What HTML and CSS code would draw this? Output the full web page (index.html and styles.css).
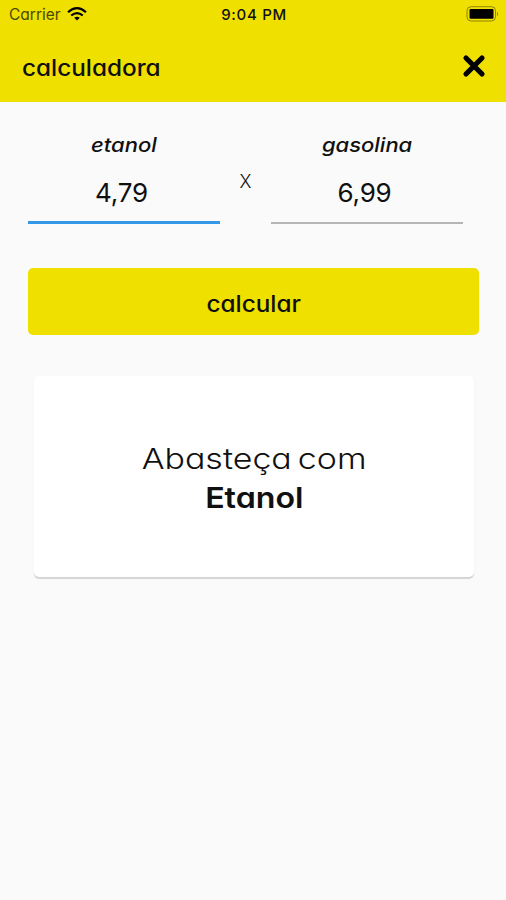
FILE: index.html
```html
<!DOCTYPE html>
<html lang="pt-BR">
<head>
    <meta charset="UTF-8">
    <meta name="viewport" content="width=device-width, initial-scale=1.0">
    <title>calculadora</title>
    <link rel="stylesheet" href="styles.css">
</head>
<body>
    <header class="header">
        <div class="status">
            <div class="carrier">
                <span class="carrier-name">Carrier</span>
                <svg class="wifi" width="20" height="14" viewBox="0 0 20 14" fill="none" stroke="#000" stroke-width="2.2">
                    <path d="M1 5.2Q10-2.8 19 5.2"/>
                    <path d="M4.2 8.5Q10 3.6 15.8 8.5"/>
                    <path d="M10 13.6L7.2 10.8Q10 8.6 12.8 10.8Z" fill="#000" stroke="none"/>
                </svg>
            </div>
            <span class="clock">9:04 PM</span>
            <svg class="battery" width="33" height="16" viewBox="0 0 33 16">
                <rect x="1" y=".7" width="28.5" height="14.3" rx="4" fill="none" stroke="#000" stroke-opacity=".4"/>
                <rect x="3.5" y="3" width="24" height="9.7" rx="1"/>
                <path d="M31 5.5Q33.2 7.9 31 10.3Z" fill-opacity=".4"/>
            </svg>
        </div>
        <div class="title-bar">
            <h1 class="title">calculadora</h1>
            <button class="close" aria-label="fechar">
                <svg width="24" height="24" viewBox="0 0 24 24" stroke="#000" stroke-width="5.2" stroke-linecap="round">
                    <path d="M4 4L20 20M20 4L4 20"/>
                </svg>
            </button>
        </div>
    </header>
    <main class="content">
        <form class="prices">
            <label class="field">
                <span class="label">etanol</span>
                <input class="price focused" id="etanol" type="text" inputmode="decimal" value="4,79">
            </label>
            <span class="times">X</span>
            <label class="field">
                <span class="label">gasolina</span>
                <input class="price" id="gasolina" type="text" inputmode="decimal" value="6,99">
            </label>
        </form>
        <button class="calc"><span class="calc-text">calcular</span></button>
        <div class="result">
            <span class="result-text">Abasteça com</span>
            <strong class="result-fuel">Etanol</strong>
        </div>
    </main>
</body>
</html>
```

FILE: styles.css
```css
* {
    box-sizing: border-box;
}
body {
    margin: 0;
    min-height: 100vh;
    background-color: #fafafa;
    color: #101010;
    font-family: Inter, "Liberation Sans", sans-serif;
    /* single-storey a */
    font-feature-settings: "cv11";
}
button, input {
    font: inherit;
    font-feature-settings: inherit;
    color: inherit;
    border: none;
    padding: 0;
}
.header {
    height: 102px;
    background-color: #efe000;
}
.status {
    display: grid;
    grid-template-columns: 1fr auto 1fr;
    align-items: center;
    height: 28px;
    padding: 0 7px 0 9px;
}
.carrier {
    display: flex;
    align-items: center;
    gap: 6px;
}
.carrier-name {
    font-size: 15.5px;
    color: #4c4800;
}
.clock {
    font-size: 15px;
    font-weight: 500;
    letter-spacing: 0.7px;
}
.battery {
    justify-self: end;
}
.title-bar {
    display: flex;
    justify-content: space-between;
    align-items: center;
    height: 74px;
    padding: 2px 20px 0 22px;
}
.title {
    margin: 2px 0 0;
    font-size: 22.5px;
    font-weight: 500;
    transform: scaleX(1.08);
    transform-origin: left;
}
.close {
    width: 24px;
    height: 24px;
    background: none;
}
.close svg {
    display: block;
}
.content {
    padding: 28px 27px 0 28px;
}
.prices {
    display: flex;
}
.field {
    width: 192px;
    display: flex;
    flex-direction: column;
    align-items: center;
}
.label {
    height: 30px;
    line-height: 30px;
    font-size: 20px;
    font-style: italic;
    font-weight: 500;
    transform: scaleX(1.1);
}
.price {
    width: 100%;
    height: 64px;
    padding: 2px 5px 0 0;
    border-bottom: 2px solid #b5b5b5;
    background: none;
    text-align: center;
    font-size: 26px;
    letter-spacing: -0.2px;
    outline: none;
}
.price.focused {
    padding-top: 3px;
    border-bottom: 3px solid #3498e8;
}
.times {
    width: 51px;
    padding-top: 41px;
    text-align: center;
    font-size: 18px;
    font-weight: 300;
}
.calc {
    display: block;
    width: 100%;
    height: 67px;
    margin-top: 44px;
    padding-top: 3px;
    border-radius: 5px;
    background-color: #efe000;
    font-size: 22.5px;
    font-weight: 500;
}
.calc-text {
    display: inline-block;
    transform: scaleX(1.08);
}
.result {
    display: flex;
    flex-direction: column;
    align-items: center;
    height: 201px;
    margin: 41px 5px 0 6px;
    padding-top: 63px;
    border-radius: 5px;
    background-color: #fff;
    box-shadow: 0 1.5px 1px rgba(0, 0, 0, 0.15);
}
.result-text, .result-fuel {
    line-height: 39px;
    font-size: 29px;
}
.result-text {
    font-weight: 300;
    word-spacing: -3px;
    transform: scaleX(1.17);
}
.result-fuel {
    font-weight: 600;
    transform: scaleX(1.11);
}
```
